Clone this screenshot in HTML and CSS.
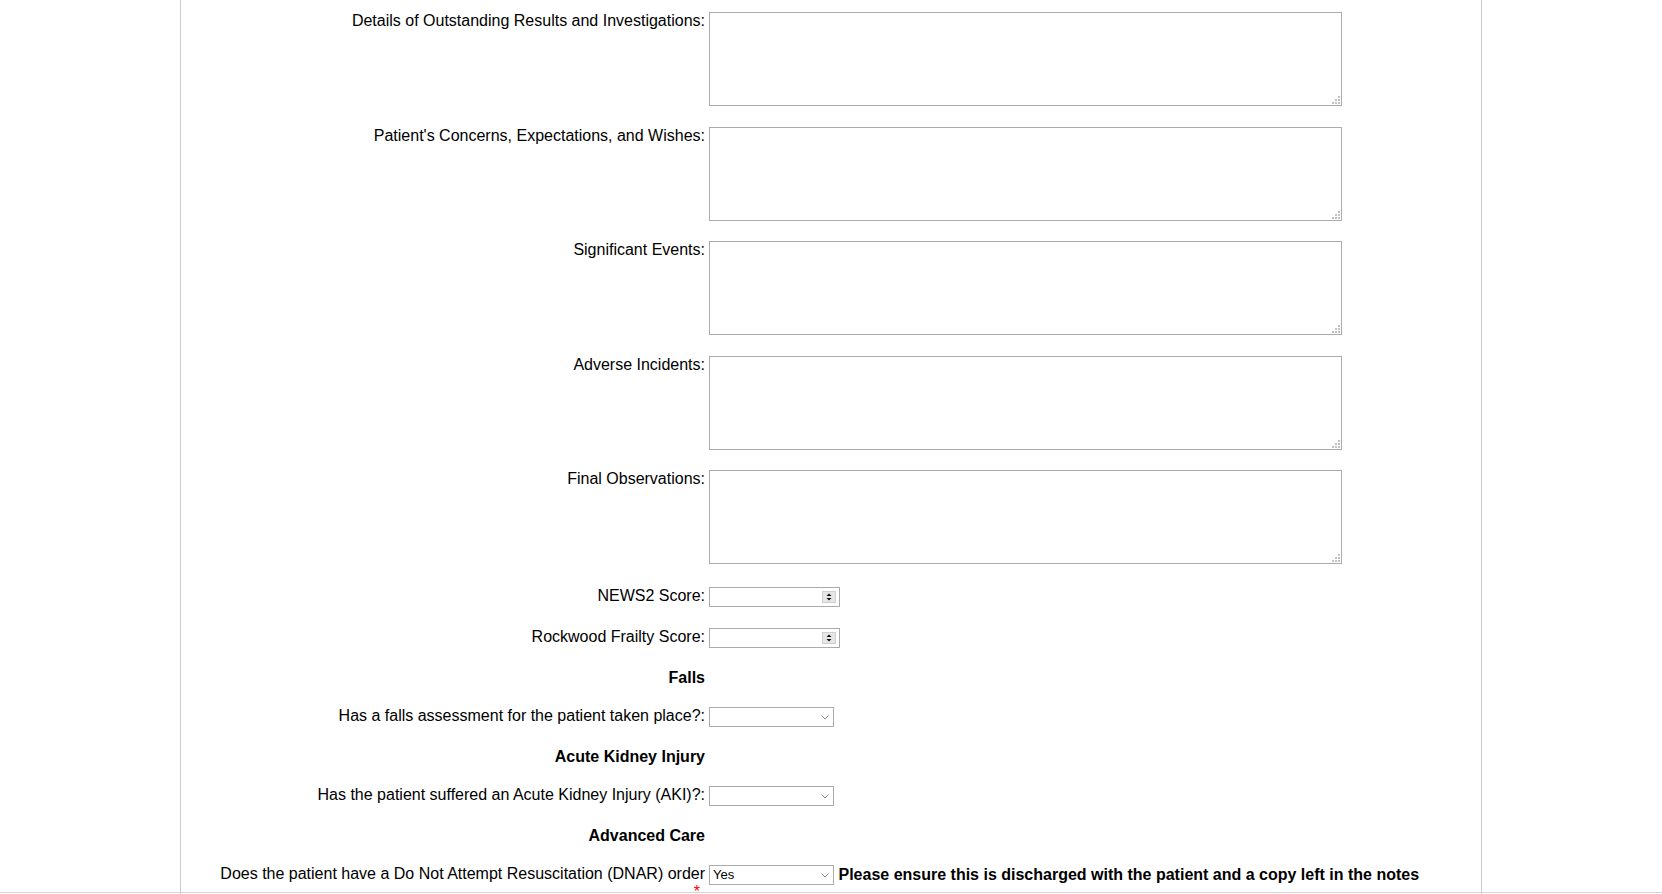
FILE: index.html
```html
<!DOCTYPE html>
<html lang="en">
<head>
<meta charset="utf-8">
<title>Discharge form</title>
<link rel="stylesheet" href="styles.css">
</head>
<body>
<div class="page">
  <div class="form">
    <div class="row row-ta">
      <label class="lbl">Details of Outstanding Results and Investigations:</label>
      <div class="ta-wrap"><textarea class="ta"></textarea><svg class="grip" width="8" height="8" viewBox="0 0 8 8"><rect x="6" y="0" width="2" height="2"/><rect x="3" y="3" width="2" height="2"/><rect x="6" y="3" width="2" height="2"/><rect x="0" y="6" width="2" height="2"/><rect x="3" y="6" width="2" height="2"/><rect x="6" y="6" width="2" height="2"/></svg></div>
    </div>
    <div class="row row-ta">
      <label class="lbl">Patient's Concerns, Expectations, and Wishes:</label>
      <div class="ta-wrap"><textarea class="ta"></textarea><svg class="grip" width="8" height="8" viewBox="0 0 8 8"><rect x="6" y="0" width="2" height="2"/><rect x="3" y="3" width="2" height="2"/><rect x="6" y="3" width="2" height="2"/><rect x="0" y="6" width="2" height="2"/><rect x="3" y="6" width="2" height="2"/><rect x="6" y="6" width="2" height="2"/></svg></div>
    </div>
    <div class="row row-ta">
      <label class="lbl">Significant Events:</label>
      <div class="ta-wrap"><textarea class="ta"></textarea><svg class="grip" width="8" height="8" viewBox="0 0 8 8"><rect x="6" y="0" width="2" height="2"/><rect x="3" y="3" width="2" height="2"/><rect x="6" y="3" width="2" height="2"/><rect x="0" y="6" width="2" height="2"/><rect x="3" y="6" width="2" height="2"/><rect x="6" y="6" width="2" height="2"/></svg></div>
    </div>
    <div class="row row-ta">
      <label class="lbl">Adverse Incidents:</label>
      <div class="ta-wrap"><textarea class="ta"></textarea><svg class="grip" width="8" height="8" viewBox="0 0 8 8"><rect x="6" y="0" width="2" height="2"/><rect x="3" y="3" width="2" height="2"/><rect x="6" y="3" width="2" height="2"/><rect x="0" y="6" width="2" height="2"/><rect x="3" y="6" width="2" height="2"/><rect x="6" y="6" width="2" height="2"/></svg></div>
    </div>
    <div class="row row-ta">
      <label class="lbl">Final Observations:</label>
      <div class="ta-wrap"><textarea class="ta"></textarea><svg class="grip" width="8" height="8" viewBox="0 0 8 8"><rect x="6" y="0" width="2" height="2"/><rect x="3" y="3" width="2" height="2"/><rect x="6" y="3" width="2" height="2"/><rect x="0" y="6" width="2" height="2"/><rect x="3" y="6" width="2" height="2"/><rect x="6" y="6" width="2" height="2"/></svg></div>
    </div>

    <div class="row row-in row-first-in">
      <label class="lbl">NEWS2 Score:</label>
      <div class="num-wrap"><input class="num" type="number"><svg class="spin" width="14" height="12" viewBox="0 0 14 12"><rect x="0.5" y="0.5" width="13" height="11" fill="#e6e6e6" stroke="#cfcfcf"/><polygon points="4.5,5 9.5,5 7,2.5" fill="#111"/><polygon points="4.5,7 9.5,7 7,9.5" fill="#111"/></svg></div>
    </div>
    <div class="row row-in">
      <label class="lbl">Rockwood Frailty Score:</label>
      <div class="num-wrap"><input class="num" type="number"><svg class="spin" width="14" height="12" viewBox="0 0 14 12"><rect x="0.5" y="0.5" width="13" height="11" fill="#e6e6e6" stroke="#cfcfcf"/><polygon points="4.5,5 9.5,5 7,2.5" fill="#111"/><polygon points="4.5,7 9.5,7 7,9.5" fill="#111"/></svg></div>
    </div>

    <div class="row row-h">
      <div class="lbl head">Falls</div>
      <div></div>
    </div>
    <div class="row row-in">
      <label class="lbl">Has a falls assessment for the patient taken place?:</label>
      <div class="sel-wrap"><select class="sel"><option></option><option>Yes</option><option>No</option></select><svg class="chev" width="8" height="5" viewBox="0 0 8 5"><polyline points="0.5,0.5 4,4 7.5,0.5" fill="none" stroke="#8a8a8a" stroke-width="1"/></svg></div>
    </div>

    <div class="row row-h">
      <div class="lbl head">Acute Kidney Injury</div>
      <div></div>
    </div>
    <div class="row row-in">
      <label class="lbl">Has the patient suffered an Acute Kidney Injury (AKI)?:</label>
      <div class="sel-wrap"><select class="sel"><option></option><option>Yes</option><option>No</option></select><svg class="chev" width="8" height="5" viewBox="0 0 8 5"><polyline points="0.5,0.5 4,4 7.5,0.5" fill="none" stroke="#8a8a8a" stroke-width="1"/></svg></div>
    </div>

    <div class="row row-h">
      <div class="lbl head">Advanced Care</div>
      <div></div>
    </div>
    <div class="row row-in">
      <label class="lbl">Does the patient have a Do Not Attempt Resuscitation (DNAR) order<span class="req">*</span></label>
      <div class="field-note">
        <div class="sel-wrap"><select class="sel"><option selected>Yes</option><option>No</option></select><svg class="chev" width="8" height="5" viewBox="0 0 8 5"><polyline points="0.5,0.5 4,4 7.5,0.5" fill="none" stroke="#8a8a8a" stroke-width="1"/></svg></div>
        <strong class="note">Please ensure this is discharged with the patient and a copy left in the notes</strong>
      </div>
    </div>
  </div>
</div>
<div class="bottom-line"></div>
</body>
</html>
```

FILE: styles.css
```css
html, body {
  margin: 0;
  padding: 0;
  background: #fff;
}

body {
  font-family: "Liberation Sans", Arial, sans-serif;
  font-size: 16px;
  color: #000;
  overflow: hidden;
}

.page {
  width: 1300px;
  margin: 0 auto;
  min-height: 100vh;
  border-left: 1px solid #cccccc;
  border-right: 1px solid #cccccc;
  background: #fff;
}

.form {
  display: flex;
  flex-direction: column;
  gap: 20px;
  padding-top: 12px;
}

.row {
  display: grid;
  grid-template-columns: 524px 1fr;
  column-gap: 4px;
  align-items: start;
}

.row-ta {
  height: 94.5px;
}

.row-in {
  min-height: 21px;
}

.row-first-in {
  margin-top: 2px;
}

.lbl {
  text-align: right;
  line-height: normal;
}

.head {
  font-weight: bold;
}

.req {
  display: block;
  color: #ff0000;
  padding-right: 5px;
}

/* textarea */
.ta-wrap {
  position: relative;
  width: 633px;
  height: 94px;
}

.ta {
  display: block;
  box-sizing: border-box;
  width: 633px;
  height: 94px;
  margin: 0;
  padding: 2px;
  border: 1px solid #ababab;
  resize: none;
  font-family: "Liberation Sans", Arial, sans-serif;
  font-size: 13px;
  background: #fff;
}

.grip {
  position: absolute;
  right: 2px;
  bottom: 2px;
  fill: #c2c2c2;
}

/* number inputs */
.num-wrap {
  position: relative;
  width: 131px;
  height: 20px;
}

.num {
  display: block;
  box-sizing: border-box;
  width: 131px;
  height: 20px;
  margin: 0;
  padding: 0 20px 0 3px;
  border: 1px solid #ababab;
  font-family: "Liberation Sans", Arial, sans-serif;
  font-size: 13px;
  -moz-appearance: textfield;
  appearance: textfield;
  background: #fff;
}

.num::-webkit-inner-spin-button,
.num::-webkit-outer-spin-button {
  -webkit-appearance: none;
  margin: 0;
}

.spin {
  position: absolute;
  right: 4px;
  top: 4px;
}

/* selects */
.sel-wrap {
  position: relative;
  width: 125px;
  height: 20px;
  flex: none;
}

.sel {
  display: block;
  box-sizing: border-box;
  width: 125px;
  height: 20px;
  margin: 0;
  padding: 0 16px 0 3px;
  border: 1px solid #ababab;
  border-radius: 0;
  background: #fff;
  color: #000;
  font-family: "Liberation Sans", Arial, sans-serif;
  font-size: 13px;
  -webkit-appearance: none;
  appearance: none;
}

.chev {
  position: absolute;
  right: 5px;
  top: 8px;
}

.field-note {
  display: flex;
  align-items: center;
  gap: 4.5px;
}

.note {
  font-weight: bold;
  white-space: nowrap;
}

.bottom-line {
  position: fixed;
  left: 0;
  right: 0;
  bottom: 1px;
  height: 1px;
  background: #d4d4d4;
}
```
